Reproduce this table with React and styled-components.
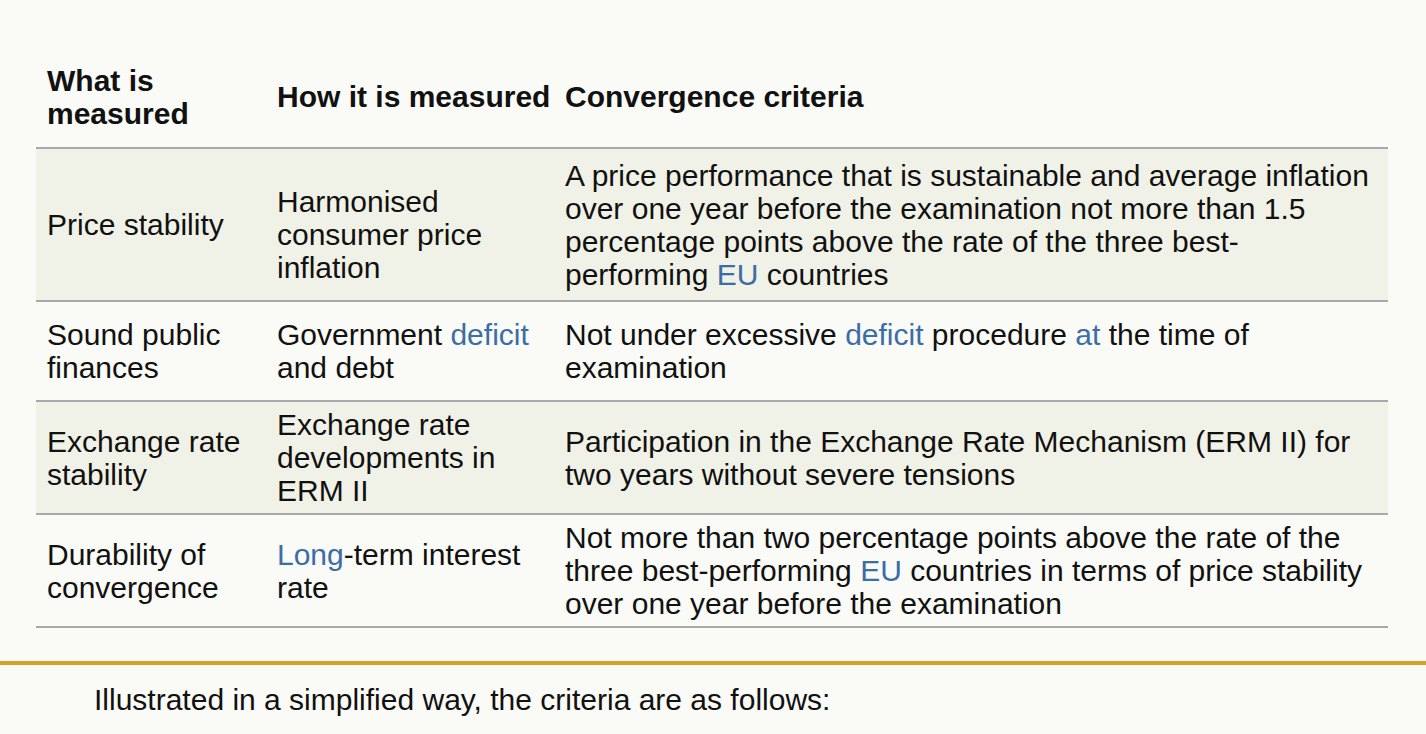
import React from "react";
import styled, { createGlobalStyle } from "styled-components";

const GlobalStyle = createGlobalStyle`
  html, body {
    margin: 0;
    padding: 0;
    background: #fafaf6;
  }
  body {
    font-family: "Liberation Sans", Arial, sans-serif;
    color: #111;
  }
`;

const rows = [
  {
    what: "Price stability",
    how: ["Harmonised consumer price inflation"],
    howShift: 20,
    criteria: [
      "A price performance that is sustainable and average inflation over one year before the examination not more than 1.5 percentage points above the rate of the three best-performing ",
      { link: "EU" },
      " countries",
    ],
    shaded: true,
    h: 151,
  },
  {
    what: "Sound public finances",
    how: ["Government ", { link: "deficit" }, " and debt"],
    criteria: [
      "Not under excessive ",
      { link: "deficit" },
      " procedure ",
      { link: "at" },
      " the time of examination",
    ],
    shaded: false,
    h: 98,
  },
  {
    what: "Exchange rate stability",
    how: ["Exchange rate developments in ERM II"],
    criteria: [
      "Participation in the Exchange Rate Mechanism (ERM II) for two years without severe tensions",
    ],
    shaded: true,
    h: 111,
  },
  {
    what: "Durability of convergence",
    how: [{ link: "Long" }, "-term interest rate"],
    criteria: [
      "Not more than two percentage points above the rate of the three best-performing ",
      { link: "EU" },
      " countries in terms of price stability over one year before the examination",
    ],
    shaded: false,
    h: 111,
  },
];

const renderParts = (parts) =>
  parts.map((p, i) =>
    typeof p === "string" ? (
      <React.Fragment key={i}>{p}</React.Fragment>
    ) : (
      <Term key={i}>{p.link}</Term>
    )
  );

const App = () => {
  return (
    <Page>
      <GlobalStyle />
      <Table>
        <HeadRow>
          <HeadCell>What is measured</HeadCell>
          <HeadCell>How it is measured</HeadCell>
          <HeadCell>Convergence criteria</HeadCell>
        </HeadRow>
        {rows.map((row) => (
          <Row key={row.what} $shaded={row.shaded} $h={row.h}>
            <Cell>{row.what}</Cell>
            <Cell $shift={row.howShift}>{renderParts(row.how)}</Cell>
            <Cell>{renderParts(row.criteria)}</Cell>
          </Row>
        ))}
      </Table>
      <Divider />
      <Intro>Illustrated in a simplified way, the criteria are as follows:</Intro>
    </Page>
  );
};

const Page = styled.main`
  padding-top: 46px;
  min-height: 734px;
  box-sizing: border-box;
`;

const Table = styled.section`
  margin: 0 38px 0 36px;
  font-size: 30px;
  line-height: 33px;
`;

const grid = `
  display: grid;
  grid-template-columns: 230px 288px 1fr;
  align-items: center;
  border-bottom: 2px solid #a9a9a9;
`;

const HeadRow = styled.div`
  ${grid}
  min-height: 101px;
`;

const HeadCell = styled.div`
  padding: 0 3px 0 11px;
  font-weight: bold;
`;

const Row = styled.div`
  ${grid}
  min-height: ${(p) => p.$h}px;
  background: ${(p) => (p.$shaded ? "#f1f2e7" : "transparent")};
`;

const Cell = styled.div`
  padding: ${(p) => p.$shift || 0}px 3px 0 11px;

  &:last-child {
    padding-right: 14px;
  }
`;

const Term = styled.span`
  color: #3b6da6;
`;

const Divider = styled.hr`
  margin: 33px 0 0;
  border: none;
  height: 4px;
  background: #d6a225;
`;

const Intro = styled.p`
  margin: 18px 0 0 94px;
  font-size: 30px;
  line-height: 33px;
`;

export default App;
